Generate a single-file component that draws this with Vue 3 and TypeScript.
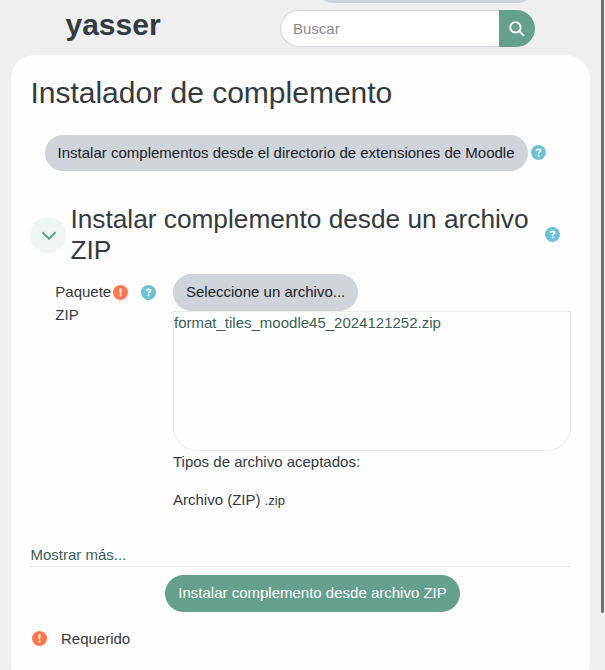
<script setup lang="ts">
import { h, ref } from 'vue'

const siteName = ref<string>('yasser')
const fileName = ref<string>('format_tiles_moodle45_2024121252.zip')
const query = ref<string>('')

const svgProps = { width: 15, height: 15, viewBox: '0 0 15 15', fill: 'none' }

const HelpIcon = () =>
  h('svg', { ...svgProps, stroke: '#fff', 'stroke-width': 1.7 }, [
    h('circle', { cx: 7.5, cy: 7.5, r: 7.5, fill: '#6bc2d5', stroke: 'none' }),
    h('path', { d: 'M5.2 5.7 C5.6 4.6 6.4 4.3 7.5 4.3 C8.9 4.3 9.7 5 9.7 5.8 C9.7 7.2 7.5 7.1 7.5 8.6' }),
    h('circle', { cx: 7.5, cy: 10.5, r: 1, fill: '#fff', stroke: 'none' }),
  ])

const RequiredIcon = () =>
  h('svg', { ...svgProps }, [
    h('circle', { cx: 7.5, cy: 7.5, r: 7.5, fill: '#ff7750' }),
    h('path', { d: 'M6.4 3.6 H8.6 L8.2 8.6 H6.8 Z', fill: '#fff' }),
    h('circle', { cx: 7.5, cy: 10.6, r: 1.1, fill: '#fff' }),
  ])
</script>

<template>
  <div class="page">
    <header class="header">
      <div class="header-pill"></div>
      <div class="header-row">
        <div class="brand">{{ siteName }}</div>
        <form class="search" @submit.prevent>
          <input v-model="query" type="text" placeholder="Buscar" />
          <button type="submit" aria-label="Buscar">
            <svg width="16" height="16" viewBox="0 0 16 16" fill="none" stroke="#fff" stroke-width="1.9">
              <circle cx="6.4" cy="6.3" r="5.2" />
              <path d="M10.2 10.1 L14.9 14.8" />
            </svg>
          </button>
        </form>
      </div>
    </header>

    <main class="card">
      <h2>Instalador de complemento</h2>

      <div class="directory">
        <button class="btn secondary">Instalar complementos desde el directorio de extensiones de Moodle</button>
        <span class="icon"><HelpIcon /></span>
      </div>

      <div class="section-head">
        <button class="toggle" aria-label="Contraer">
          <svg width="16" height="10" viewBox="0 0 16 10" fill="none" stroke="#64a08d" stroke-width="2">
            <path d="M1.4 1.2 L8 7.8 L14.6 1.2" />
          </svg>
        </button>
        <h3>Instalar complemento desde un archivo ZIP</h3>
        <span class="icon"><HelpIcon /></span>
      </div>

      <div class="field">
        <div class="label">
          <span class="label-text">Paquete ZIP</span>
          <span class="icon"><RequiredIcon /></span>
          <span class="icon help"><HelpIcon /></span>
        </div>
        <div class="picker">
          <button class="btn secondary pick">Seleccione un archivo...</button>
          <div class="dropzone"><a>{{ fileName }}</a></div>
          <p class="types">Tipos de archivo aceptados:</p>
          <p class="type">Archivo (ZIP) <small>.zip</small></p>
        </div>
      </div>

      <div class="more"><a>Mostrar más...</a></div>

      <div class="actions">
        <button class="btn primary">Instalar complemento desde archivo ZIP</button>
      </div>

      <div class="legend">
        <span class="icon"><RequiredIcon /></span>
        <span>Requerido</span>
      </div>
    </main>

    <div class="scrollbar"></div>
  </div>
</template>

<style>
body {
  margin: 0;
  overflow: hidden;
}
</style>

<style scoped>
.page {
  box-sizing: border-box;
  position: relative;
  width: 605px;
  height: 670px;
  overflow: hidden;
  background: #efefef;
  color: #343a40;
  font: 15px/22.5px "Liberation Sans", Arial, sans-serif;
}
.page * {
  box-sizing: border-box;
}
.header {
  display: flow-root;
  height: 55px;
  padding: 0 70px 0 65px;
}
.header-pill {
  width: 220px;
  height: 36px;
  margin: -33px 0 0 auto;
  border-radius: 18px;
  background: #ced4da;
}
.header-row {
  display: flex;
  justify-content: space-between;
  padding-top: 7px;
}
.brand {
  padding-left: 0.5px;
  font-size: 30px;
  font-weight: 700;
  line-height: 30px;
}
.search {
  display: flex;
  width: 255px;
  height: 37px;
}
.search input {
  flex: 1;
  min-width: 0;
  padding: 1px 12px 0;
  border: 1px solid #ced4da;
  border-right: 0;
  border-radius: 18.5px 0 0 18.5px;
  background: #fff;
  color: #343a40;
  font: inherit;
  outline: 0;
}
.search input::placeholder {
  color: #8b8b8b;
  opacity: 1;
}
.search button {
  display: flex;
  align-items: center;
  justify-content: center;
  width: 36px;
  padding: 0;
  border: 0;
  border-radius: 0 18.5px 18.5px 0;
  background: #64a08d;
}
.card {
  width: 579px;
  height: 632px;
  margin-left: 11px;
  padding: 20px 19px 0;
  border-radius: 24px;
  background: #fdfdfd;
}
h2,
h3,
p {
  margin: 0;
  font-weight: 400;
}
h2 {
  padding-left: 0.4px;
  font-size: 30px;
  line-height: 36px;
}
.btn {
  height: 36px;
  padding: 0 12.6px;
  border: 0;
  border-radius: 18.5px;
  font: inherit;
  text-align: left;
  white-space: nowrap;
}
.secondary {
  background: #ced4da;
  color: #1d2125;
}
.primary {
  height: 37px;
  padding-left: 13.3px;
  background: #64a08d;
  color: #fff;
}
.icon {
  display: flex;
  flex: none;
  width: 15px;
  height: 15px;
}
.directory {
  display: flex;
  align-items: center;
  gap: 3px;
  margin-top: 24px;
  padding-left: 15px;
}
.directory .btn {
  width: 483px;
}
.directory .icon {
  margin-bottom: 1px;
}
.section-head {
  display: flex;
  align-items: center;
  margin-top: 32px;
  padding-right: 11px;
}
.section-head .icon {
  margin-bottom: 1px;
}
.toggle {
  display: flex;
  flex: none;
  align-items: center;
  justify-content: center;
  width: 36px;
  height: 36px;
  padding: 2px 0 0 2px;
  border: 0;
  border-radius: 50%;
  background: #eff5f3;
}
h3 {
  flex: 1;
  padding: 1px 0 0 4.4px;
  font-size: 26.25px;
  line-height: 31px;
}
.field {
  display: flex;
  margin-top: 8px;
}
.label {
  display: flex;
  align-items: flex-start;
  width: 143px;
  padding: 7px 17px 0 25.3px;
}
.label-text {
  width: 57.7px;
}
.label .icon {
  margin-top: 4px;
}
.label .help {
  margin-left: auto;
}
.picker {
  width: 398px;
}
.pick {
  display: block;
  width: 185px;
  height: 37px;
  padding-left: 13px;
}
.dropzone {
  height: 140px;
  border: 1px solid #ececec;
  border-radius: 0 0 24px 24px;
}
a {
  color: #3c6055;
}
.type {
  margin-top: 15px;
}
small {
  font-size: 13px;
}
.more {
  height: 23px;
  margin-top: 32px;
  padding-left: 0.4px;
  border-bottom: 1px solid #e9e9e9;
}
.actions {
  display: flex;
  padding: 8px 0 0 135px;
}
.actions .btn {
  width: 295px;
}
.legend {
  display: flex;
  align-items: center;
  gap: 14px;
  margin-top: 16px;
  padding-left: 2px;
}
.legend .icon {
  margin-bottom: 1px;
}
.scrollbar {
  position: absolute;
  top: 0;
  right: 1px;
  width: 3px;
  height: 613px;
  border-radius: 0 0 2px 2px;
  background: #707070;
}
</style>
